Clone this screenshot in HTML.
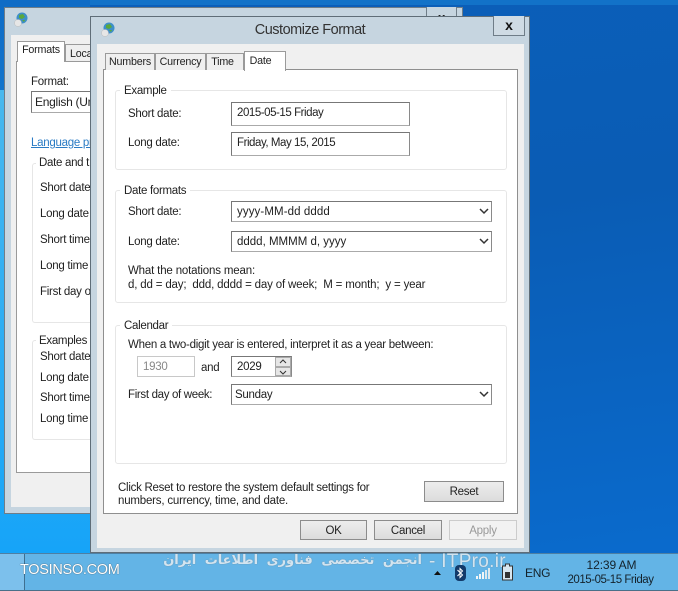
<!DOCTYPE html>
<html><head><meta charset="utf-8"><style>
html,body{margin:0;padding:0}
body{width:678px;height:591px;overflow:hidden;position:relative;font-family:"Liberation Sans","Noto Sans CJK SC",sans-serif;font-size:11.5px;letter-spacing:-.27px;color:#222;background:linear-gradient(172deg,#0b5fba 0%,#0a5cb4 40%,#0a6ccf 100%)}
div,span{position:absolute;box-sizing:border-box;white-space:nowrap}
.t{line-height:14px;margin-top:1px}
.in{border:1px solid #8a8a8a;background:#fff;padding-left:5px;line-height:20px;border-bottom-color:#aaa;border-top-color:#777;border-left-color:#777}
.gb{border:1px solid #e6e6e6;border-radius:3px;background:#fff}
.lg{background:#fff;padding:0 4px;line-height:14px;margin-top:1px;letter-spacing:-.3px}
.btn{border:1px solid #8c8c8c;background:linear-gradient(#ededed,#dcdcdc);text-align:center;line-height:20px}
.tab{border:1px solid #9a9a9a;border-bottom:0;background:#efefef;text-align:center;line-height:17px;font-size:10.7px;letter-spacing:-.2px}
</style></head><body>
<div style="left:0;top:0;width:678px;height:5px;background:#1272c8"></div>
<div style="left:0;top:0;width:90px;height:90px;background:linear-gradient(#0f6cc6,#1074cc)"></div>
<div style="left:0;top:90px;width:90px;height:463px;background:linear-gradient(#48b8ee,#16a4f8)"></div>
<!-- back window -->
<div style="left:4px;top:7px;width:459px;height:507px;background:#c6d5e0;border:1px solid #6f7d88"></div>
<svg style="position:absolute;left:14px;top:12px" width="14" height="16" viewBox="0 0 14 16"><circle cx="8" cy="6" r="5.500" fill="#3d8fc9"/><path d="M5 3l4-1 2 3-3 2-3-1zM8 8l3 0-1 2z" fill="#5aa83c"/><circle cx="4" cy="11" r="3.500" fill="#e6e6e6" stroke="#bbb" stroke-width=".5"/></svg>
<div style="left:426px;top:7px;width:31px;height:20px;background:#c6d5e0;border:1px solid #6f7d88;border-top:0"></div>
<div style="left:438px;top:11px;font:bold 13px/14px 'Liberation Sans',sans-serif;color:#222;letter-spacing:0">x</div>
<div style="left:11px;top:35px;width:90px;height:472px;background:#f0f0f0"></div>
<div style="left:16px;top:61px;width:80px;height:412px;background:#fff;border:1px solid #9a9a9a"></div>
<div class="tab" style="left:17px;top:41px;width:48px;height:21px;background:#fff;border-bottom:0">Formats</div>
<div class="tab" style="left:65px;top:44px;width:30px;height:17px;text-align:left;padding-left:4px;overflow:hidden;line-height:18px">Locat</div>
<div class="t" style="left:31px;top:74px">Format:</div>
<div class="in" style="left:31px;top:91px;width:65px;height:22px;border-right:0;padding-left:3px;font-size:12px;overflow:hidden">English (Uni</div>
<div class="t" style="left:31px;top:135px;color:#2a7bc4;text-decoration:underline;width:60px;overflow:hidden">Language pr</div>
<div class="gb" style="left:32px;top:163px;width:70px;height:160px;border-right:0"></div>
<div class="lg" style="left:36px;top:155px;padding:0 0 0 3px;width:55px;overflow:hidden">Date and t</div>
<div class="t" style="left:40px;top:180px">Short date</div>
<div class="t" style="left:40px;top:206px">Long date</div>
<div class="t" style="left:40px;top:232px">Short time</div>
<div class="t" style="left:40px;top:258px">Long time</div>
<div class="t" style="left:40px;top:284px;width:50px;overflow:hidden">First day of</div>
<div class="gb" style="left:32px;top:340px;width:70px;height:100px;border-right:0"></div>
<div class="lg" style="left:36px;top:333px;padding:0 0 0 3px;width:55px;overflow:hidden">Examples</div>
<div class="t" style="left:40px;top:349px">Short date</div>
<div class="t" style="left:40px;top:370px">Long date</div>
<div class="t" style="left:40px;top:390px">Short time</div>
<div class="t" style="left:40px;top:411px">Long time</div>
<!-- taskbar -->
<div style="left:0;top:553px;width:678px;height:38px;background:#63b4e6;border-top:1px solid #4d7fa3"></div>
<div style="left:0;top:554px;width:25px;height:37px;background:#7cc0ec;border-right:1px solid #3f6f90"></div>
<div style="left:0;top:590px;width:678px;height:1px;background:#4a6f88"></div>
<!-- front window -->
<div style="left:90px;top:16px;width:440px;height:537px;background:#c6d5e0;border:1px solid #5f6d78"></div>
<svg style="position:absolute;left:100px;top:22px" width="16" height="16" viewBox="0 0 14 16"><circle cx="8" cy="6" r="5.500" fill="#3d8fc9"/><path d="M5 3l4-1 2 3-3 2-3-1zM8 8l3 0-1 2z" fill="#5aa83c"/><circle cx="4" cy="11" r="3.500" fill="#e6e6e6" stroke="#bbb" stroke-width=".5"/></svg>
<div style="left:90px;top:21px;width:440px;text-align:center;font-size:14.5px;letter-spacing:-.5px;line-height:18px;color:#333">Customize Format</div>
<div style="left:493px;top:16px;width:32px;height:20px;background:#cfdbe4;border:1px solid #6f7d88;border-top:0;text-align:center;font:bold 14px/18px 'Liberation Sans',sans-serif;color:#111;letter-spacing:0">x</div>
<div style="left:97px;top:44px;width:427px;height:504px;background:#f0f0f0"></div>
<div style="left:103px;top:69px;width:415px;height:445px;background:#fff;border:1px solid #8f8f8f"></div>
<div class="tab" style="left:105px;top:53px;width:50px;height:17px">Numbers</div>
<div class="tab" style="left:155px;top:53px;width:51px;height:17px">Currency</div>
<div class="tab" style="left:206px;top:53px;width:38px;height:17px;padding-right:5px">Time</div>
<div class="tab" style="left:244px;top:51px;width:42px;height:20px;background:#fff;border-bottom:0;line-height:18px;padding-right:9px">Date</div>
<!-- Example -->
<div class="gb" style="left:115px;top:90px;width:392px;height:80px"></div>
<div class="lg" style="left:120px;top:83px">Example</div>
<div class="t" style="left:128px;top:106px">Short date:</div>
<div class="in" style="left:231px;top:102px;width:179px;height:24px;padding-left:5px;line-height:20px;letter-spacing:-.45px">2015-05-15 Friday</div>
<div class="t" style="left:128px;top:135px">Long date:</div>
<div class="in" style="left:231px;top:132px;width:179px;height:24px;padding-left:5px;line-height:20px;letter-spacing:-.45px">Friday, May 15, 2015</div>
<!-- Date formats -->
<div class="gb" style="left:115px;top:190px;width:392px;height:113px"></div>
<div class="lg" style="left:120px;top:183px">Date formats</div>
<div class="t" style="left:128px;top:204px">Short date:</div>
<div class="in" style="left:231px;top:201px;width:261px;height:21px;padding-left:5px;line-height:20px;letter-spacing:.1px">yyyy-MM-dd dddd</div>
<svg style="position:absolute;left:479px;top:208px" width="10" height="7"><path d="M1 1l4 4 4-4" fill="none" stroke="#333" stroke-width="1.500"/></svg>
<div class="t" style="left:128px;top:234px">Long date:</div>
<div class="in" style="left:231px;top:231px;width:261px;height:21px;padding-left:5px;line-height:20px;letter-spacing:0">dddd, MMMM d, yyyy</div>
<svg style="position:absolute;left:479px;top:238px" width="10" height="7"><path d="M1 1l4 4 4-4" fill="none" stroke="#333" stroke-width="1.500"/></svg>
<div class="t" style="left:128px;top:263px;letter-spacing:-.17px">What the notations mean:</div>
<div class="t" style="left:128px;top:277px;letter-spacing:-.17px">d, dd = day;&nbsp; ddd, dddd = day of week;&nbsp; M = month;&nbsp; y = year</div>
<!-- Calendar -->
<div class="gb" style="left:115px;top:325px;width:392px;height:139px"></div>
<div class="lg" style="left:120px;top:318px">Calendar</div>
<div class="t" style="left:128px;top:337px">When a two-digit year is entered, interpret it as a year between:</div>
<div class="in" style="left:137px;top:356px;width:58px;height:21px;border-color:#c8c8c8;color:#888;padding-left:5px;line-height:20px">1930</div>
<div class="t" style="left:201px;top:360px">and</div>
<div class="in" style="left:231px;top:356px;width:61px;height:21px;padding-left:5px;line-height:20px">2029</div>
<div style="left:275px;top:357px;width:16px;height:10px;background:#e6e6e6;border:1px solid #aaa"></div>
<div style="left:275px;top:367px;width:16px;height:9px;background:#e6e6e6;border:1px solid #aaa"></div>
<svg style="position:absolute;left:279px;top:359px" width="8" height="16"><path d="M1 4l3-3 3 3M1 12l3 3 3-3" fill="none" stroke="#333"/></svg>
<div class="t" style="left:128px;top:387px;letter-spacing:-.33px">First day of week:</div>
<div class="in" style="left:231px;top:384px;width:261px;height:21px;padding-left:3px;line-height:20px">Sunday</div>
<svg style="position:absolute;left:479px;top:391px" width="10" height="7"><path d="M1 1l4 4 4-4" fill="none" stroke="#333" stroke-width="1.500"/></svg>
<!-- bottom -->
<div class="t" style="left:118px;top:480px">Click Reset to restore the system default settings for</div>
<div class="t" style="left:118px;top:493px;letter-spacing:-.2px">numbers, currency, time, and date.</div>
<div class="btn" style="left:424px;top:481px;width:80px;height:21px">Reset</div>
<div class="btn" style="left:300px;top:520px;width:67px;height:20px">OK</div>
<div class="btn" style="left:374px;top:520px;width:68px;height:20px">Cancel</div>
<div class="btn" style="left:449px;top:520px;width:68px;height:20px;background:#f2f2f2;border-color:#ccc;color:#999">Apply</div>
<!-- taskbar overlays -->
<div style="left:20px;top:561px;color:#fff;font-size:14.5px;line-height:18px;letter-spacing:-.3px;text-shadow:0 0 1px #333">TOSINSO.COM</div>
<div style="right:256px;top:551px;color:#d2e4f0;font-size:13px;font-weight:bold;line-height:20px;letter-spacing:0;word-spacing:4px;text-shadow:0 0 1px #6f818e;font-family:'DejaVu Sans',sans-serif" dir="rtl">انجمن تخصصی فناوری اطلاعات ایران</div>
<div style="left:429px;top:551px;color:#d2e4f0;font-size:19px;line-height:22px;letter-spacing:.3px;text-shadow:0 0 1px #6f818e">- ITPro.ir</div>
<svg style="position:absolute;left:434px;top:570px" width="8" height="6"><path d="M0 5h7L3.500 1z" fill="#111"/></svg>
<svg style="position:absolute;left:454px;top:565px" width="13" height="16"><rect x="1" y="0" width="11" height="16" rx="4" fill="#123a6a"/><path d="M3.500 5l5 5-2.500 2.500v-9l2.500 2.500-5 5" fill="none" stroke="#fff" stroke-width="1"/></svg>
<svg style="position:absolute;left:475px;top:565px" width="16" height="14"><path d="M1 14V11h2v3zM4 14V9h2v5zM7 14V7h2v7z" fill="#f2f6f8"/><path d="M10 14V5h2v9zM13 14V3h2v11z" fill="#dce8ee"/></svg>
<svg style="position:absolute;left:502px;top:563px" width="11" height="18"><path d="M3.500 1h4v2h3v14h-10v-14h3z" fill="#d8e6ef" stroke="#333" stroke-width="1"/><rect x="3" y="9" width="5" height="6" fill="#333"/></svg>
<div style="left:525px;top:566px;font-size:12px;line-height:14px;color:#14222b;letter-spacing:-.3px">ENG</div>
<div style="left:568px;top:558px;width:87px;text-align:center;font-size:12px;line-height:15px;color:#14222b;letter-spacing:-.1px">12:39 AM</div>
<div style="left:559px;top:573px;width:103px;text-align:center;font-size:11.5px;line-height:15px;color:#14222b;letter-spacing:-.47px">2015-05-15 Friday</div>
</body></html>
